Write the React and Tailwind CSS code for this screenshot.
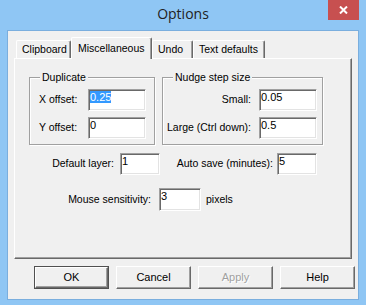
const raised =
  "border border-t-white border-l-white border-r-[#696969] border-b-[#696969] shadow-[inset_-1px_-1px_0_#a0a0a0]";

function Field({ value, w = "w-[58px]", h = "h-[22px]", selected }) {
  return (
    <div
      className={`${w} ${h} bg-white border border-t-[#a0a0a0] border-l-[#a0a0a0] border-r-white border-b-white shadow-[inset_1px_1px_0_#696969,inset_-1px_-1px_0_#e3e3e3] pl-[1px] pt-[1px] text-[11px] leading-[13px] text-black`}
    >
      {selected ? <span className="bg-[#3399ff] text-white">{value}</span> : value}
    </div>
  );
}

function Group({ title, w, children }) {
  return (
    <div
      className={`relative ${w} h-[68px] border border-[#a0a0a0] shadow-[inset_1px_1px_0_#fff,1px_1px_0_#fff]`}
    >
      <span className="absolute -top-[7px] left-[10px] px-[2px] bg-[#f0f0f0] leading-[13px]">{title}</span>
      {children}
    </div>
  );
}

function Tab({ label, w, active }) {
  if (active) {
    return (
      <div
        className={`relative z-10 translate-y-px ${w} h-[22px] bg-[#f0f0f0] border-t border-l border-r border-t-white border-l-white border-r-[#696969] shadow-[inset_-1px_0_0_#a0a0a0] rounded-t-[2px] flex items-start pt-[3px] pl-[6px]`}
      >
        {label}
      </div>
    );
  }
  return (
    <div
      className={`${w} h-[18px] bg-[#f0f0f0] border-t border-l border-r border-t-white border-l-white border-r-[#696969] shadow-[inset_-1px_0_0_#a0a0a0] rounded-t-[2px] flex items-center pl-[5px]`}
    >
      {label}
    </div>
  );
}

function Button({ label, def, disabled }) {
  return (
    <div
      className={`w-[75px] h-[23px] bg-[#f0f0f0] flex items-center justify-center ${
        def ? "border border-[#505050]" : ""
      }`}
    >
      <div
        className={`w-full h-full flex items-center justify-center ${raised} ${
          disabled ? "text-[#a0a0a0] [text-shadow:1px_1px_0_#fff]" : "text-black"
        }`}
      >
        {label}
      </div>
    </div>
  );
}

export default function App() {
  return (
    <div className="w-[366px] h-[305px] bg-[#8fc6f4] overflow-hidden font-['Liberation_Sans',Arial,sans-serif] text-[10.5px] text-black">
      {/* title bar */}
      <div className="flex h-[30px]">
        <div className="w-[38px]" />
        <div className="flex-1 text-center pt-[4px] font-['Open_Sans',sans-serif] text-[14px] leading-[20px] text-[#222]">
          Options
        </div>
        <div className="w-[31px] h-[20px] mr-[7px] bg-[#c75050] flex items-center justify-center">
          <svg width="9" height="8" viewBox="0 0 9 8">
            <path d="M1 0.5 L8 7.5 M8 0.5 L1 7.5" stroke="#fff" strokeWidth="2" />
          </svg>
        </div>
      </div>

      {/* client */}
      <div className="mx-[7px] h-[270px] border border-[#7aaede] bg-[#f0f0f0]">
        {/* tabs */}
        <div className="flex items-end h-[27px] pl-[8px]">
          <Tab label="Clipboard" w="w-[55px]" />
          <Tab label="Miscellaneous" w="w-[81px]" active />
          <Tab label="Undo" w="w-[41px]" />
          <Tab label="Text defaults" w="w-[72px]" />
        </div>

        {/* panel */}
        <div className={`ml-[6px] w-[338px] h-[201px] ${raised}`}>
          <div className="flex gap-[7px] mt-[18px] ml-[14px]">
            <Group title="Duplicate" w="w-[126px]">
              <div className="flex flex-col gap-[6px] pt-[11px]">
                <div className="flex items-center">
                  <span className="w-[58px] pl-[9px]">X offset:</span>
                  <Field value="0.25" selected />
                </div>
                <div className="flex items-center">
                  <span className="w-[58px] pl-[9px]">Y offset:</span>
                  <Field value="0" />
                </div>
              </div>
            </Group>
            <Group title="Nudge step size" w="w-[161px]">
              <div className="flex flex-col gap-[6px] pt-[11px] pr-[5px]">
                <div className="flex items-center justify-end gap-[8px]">
                  <span>Small:</span>
                  <Field value="0.05" />
                </div>
                <div className="flex items-center justify-end gap-[8px]">
                  <span>Large (Ctrl down):</span>
                  <Field value="0.5" />
                </div>
              </div>
            </Group>
          </div>

          <div className="flex items-center mt-[8px]">
            <span className="w-[99px] text-right">Default layer:</span>
            <div className="ml-[6px]">
              <Field value="1" w="w-[40px]" />
            </div>
            <span className="w-[113px] text-right">Auto save (minutes):</span>
            <div className="ml-[4px]">
              <Field value="5" w="w-[40px]" />
            </div>
          </div>

          <div className="flex items-center mt-[13px]">
            <span className="w-[136px] text-right">Mouse sensitivity:</span>
            <div className="ml-[8px]">
              <Field value="3" w="w-[42px]" h="h-[23px]" />
            </div>
            <span className="ml-[5px]">pixels</span>
          </div>
        </div>

        {/* buttons */}
        <div className="flex gap-[7px] mt-[7px] ml-[26px] text-[11px]">
          <Button label="OK" def />
          <Button label="Cancel" />
          <Button label="Apply" disabled />
          <Button label="Help" />
        </div>
      </div>
    </div>
  );
}
